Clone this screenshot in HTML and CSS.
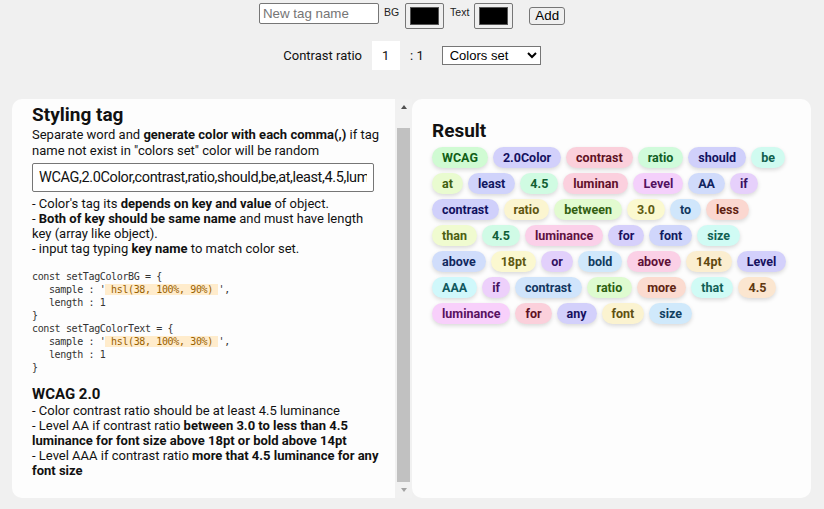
FILE: index.html
```html
<!DOCTYPE html>
<html lang="en">
<head>
<meta charset="utf-8">
<title>Styling tag</title>
<link rel="stylesheet" href="styles.css">
</head>
<body>
<header class="toolbar">
  <div class="row row-add">
    <input class="name-input" type="text" placeholder="New tag name">
    <span class="swatch-label">BG</span>
    <input class="swatch" type="color" value="#000000">
    <span class="swatch-label">Text</span>
    <input class="swatch" type="color" value="#000000">
    <button class="add-btn" type="button">Add</button>
  </div>
  <div class="row row-ratio">
    <span class="ratio-label">Contrast ratio</span>
    <input class="ratio-input" type="text" value="1">
    <span class="ratio-suffix">: 1</span>
    <select class="set-select">
      <option>Colors set</option>
    </select>
  </div>
</header>
<main class="panels">
  <section class="panel-left">
    <div class="styling">
      <h2 class="panel-title">Styling tag</h2>
      <p class="intro">Separate word and <b>generate color with each comma(,)</b> if tag name not exist in "colors set" color will be random</p>
      <input class="tags-input" type="text" value="WCAG,2.0Color,contrast,ratio,should,be,at,least,4.5,luminan,Level,AA,if,contrast,ratio,between,3.0,to,less,than,4.5,luminance,for,font,size,above,18pt,or,bold,above,14pt,Level,AAA,if,contrast,ratio,more,that,4.5,luminance,for,any,font,size">
      <p class="notes">- Color's tag its <b>depends on key and value</b> of object.<br>- <b>Both of key should be same name</b> and must have length key (array like object).<br>- input tag typing <b>key name</b> to match color set.</p>
<pre class="code">const setTagColorBG = {
   sample : '<span class="hl"> hsl(38, 100%, 90%) </span>',
   length : 1
}
const setTagColorText = {
   sample : '<span class="hl"> hsl(38, 100%, 30%) </span>',
   length : 1
}</pre>
      <h3 class="sub-title">WCAG 2.0</h3>
      <p class="notes">- Color contrast ratio should be at least 4.5 luminance<br>- Level AA if contrast ratio <b>between 3.0 to less than 4.5 luminance for font size above 18pt or bold above 14pt</b><br>- Level AAA if contrast ratio <b>more that 4.5 luminance for any font size</b></p>
    </div>
    <div class="scrollbar" aria-hidden="true">
      <span class="sb-btn sb-up"></span>
      <span class="sb-track"><span class="sb-thumb"></span></span>
      <span class="sb-btn sb-down"></span>
    </div>
  </section>
  <section class="panel result">
    <h2 class="panel-title">Result</h2>
    <div class="tags">
      <span class="tag" style="--h:125">WCAG</span>
      <span class="tag" style="--h:243">2.0Color</span>
      <span class="tag" style="--h:345">contrast</span>
      <span class="tag" style="--h:135">ratio</span>
      <span class="tag" style="--h:240">should</span>
      <span class="tag" style="--h:165">be</span>
      <span class="tag" style="--h:85">at</span>
      <span class="tag" style="--h:235">least</span>
      <span class="tag" style="--h:145">4.5</span>
      <span class="tag" style="--h:340">luminan</span>
      <span class="tag" style="--h:290">Level</span>
      <span class="tag" style="--h:225">AA</span>
      <span class="tag" style="--h:270">if</span>
      <span class="tag" style="--h:240">contrast</span>
      <span class="tag" style="--h:52">ratio</span>
      <span class="tag" style="--h:95">between</span>
      <span class="tag" style="--h:57">3.0</span>
      <span class="tag" style="--h:210">to</span>
      <span class="tag" style="--h:10">less</span>
      <span class="tag" style="--h:75">than</span>
      <span class="tag" style="--h:150">4.5</span>
      <span class="tag" style="--h:325">luminance</span>
      <span class="tag" style="--h:248">for</span>
      <span class="tag" style="--h:232">font</span>
      <span class="tag" style="--h:170">size</span>
      <span class="tag" style="--h:222">above</span>
      <span class="tag" style="--h:55">18pt</span>
      <span class="tag" style="--h:265">or</span>
      <span class="tag" style="--h:207">bold</span>
      <span class="tag" style="--h:330">above</span>
      <span class="tag" style="--h:42">14pt</span>
      <span class="tag" style="--h:245">Level</span>
      <span class="tag" style="--h:185">AAA</span>
      <span class="tag" style="--h:280">if</span>
      <span class="tag" style="--h:212">contrast</span>
      <span class="tag" style="--h:100">ratio</span>
      <span class="tag" style="--h:15">more</span>
      <span class="tag" style="--h:172">that</span>
      <span class="tag" style="--h:30">4.5</span>
      <span class="tag" style="--h:295">luminance</span>
      <span class="tag" style="--h:345">for</span>
      <span class="tag" style="--h:245">any</span>
      <span class="tag" style="--h:48">font</span>
      <span class="tag" style="--h:205">size</span>
    </div>
  </section>
</main>
<script src="script.js"></script>
</body>
</html>
```

FILE: styles.css
```css
* { box-sizing: border-box; }

body {
  margin: 0;
  background: #f0f0f0;
  font-family: Roboto, "Liberation Sans", Arial, sans-serif;
  color: #111;
}

.row {
  display: flex;
  justify-content: center;
}

.row-add {
  align-items: flex-start;
  padding-top: 3px;
  height: 28px;
}

.name-input {
  width: 120px;
  height: 21px;
  padding: 1px 3px;
  border: 1px solid #767676;
  border-radius: 2px;
  font: 13.33px "Liberation Sans", Arial, sans-serif;
  background: #fff;
}
.name-input::placeholder { color: #757575; }

.swatch-label {
  font: 10.5px "Liberation Sans", Arial, sans-serif;
  color: #222;
  margin: 3px 6px 0 5px;
}
.swatch-label + .swatch + .swatch-label { margin-left: 6px; margin-right: 5px; }

.swatch {
  width: 39px;
  height: 26px;
  padding: 3px 4px;
  border: 1px solid #767676;
  border-radius: 2px;
  background: #efefef;
  margin: 0;
}
.swatch::-webkit-color-swatch-wrapper { padding: 0; }
.swatch::-webkit-color-swatch { border: 1px solid #555; border-radius: 0; }

.add-btn {
  margin: 4px 0 0 16px;
  height: 18px;
  padding: 0 5px;
  border: 1px solid #767676;
  border-radius: 3px;
  background: #efefef;
  font: 13.33px "Liberation Sans", Arial, sans-serif;
  line-height: 16px;
  color: #000;
}

.row-ratio {
  align-items: center;
  margin-top: 13px;
  height: 29px;
  font-size: 13px;
}

.ratio-input {
  width: 28px;
  height: 29px;
  margin: 0 10px;
  padding: 0 0 0 10px;
  border: none;
  background: #fff;
  font: 13px Roboto, sans-serif;
  color: #111;
}

.ratio-suffix { margin-right: 18px; }

.set-select {
  width: 99px;
  height: 19px;
  padding: 0 0 0 3px;
  border: 1px solid #767676;
  border-radius: 0;
  background: #fff;
  font: 13px "Liberation Sans", Arial, sans-serif;
  color: #000;
}

.panels {
  display: grid;
  grid-template-columns: 400px 399px;
  margin: 29px 0 0 12px;
}

.panel-left {
  display: flex;
  height: 399px;
  background: #fdfdfd;
  border-radius: 10px 0 0 10px;
  overflow: hidden;
}

.styling {
  flex: 1;
  min-width: 0;
  overflow-y: scroll;
  scrollbar-width: none;
  padding: 20px 13px 20px 20px;
}
.styling::-webkit-scrollbar { display: none; }

.scrollbar {
  flex: none;
  width: 17px;
  display: flex;
  flex-direction: column;
  background: #f1f1f1;
}

.sb-btn {
  flex: none;
  height: 16px;
  display: flex;
  align-items: center;
  justify-content: center;
}
.sb-btn::before {
  content: "";
  width: 0;
  height: 0;
  border-left: 3.5px solid transparent;
  border-right: 3.5px solid transparent;
}
.sb-up::before { border-bottom: 4px solid #505050; }
.sb-down::before { border-top: 4px solid #a3a3a3; }

.sb-track {
  flex: 1;
  display: flex;
  flex-direction: column;
  justify-content: flex-end;
  padding: 0 2px;
}
.sb-thumb {
  height: 354px;
  background: #c1c1c1;
}

.panel {
  height: 399px;
  background: #fdfdfd;
  padding: 20px;
}

.result {
  border-radius: 10px;
  padding-right: 14px;
}

.panel-title {
  margin: 0;
  font-size: 19px;
  line-height: 24px;
  font-weight: 700;
}

.intro {
  margin: 0;
  font-size: 13px;
  line-height: 16px;
}

.tags-input {
  display: block;
  width: 342px;
  height: 29px;
  margin-top: 4px;
  padding: 0 6px;
  border: 1px solid #767676;
  border-radius: 2px;
  font: 14.5px Roboto, sans-serif;
  letter-spacing: -0.38px;
  color: #111;
  background: #fff;
}

.notes {
  margin: 4px 0 0;
  font-size: 13px;
  line-height: 15px;
}

.code {
  margin: 14px 0 0;
  font-family: "DejaVu Sans Mono", "Liberation Mono", monospace;
  font-size: 10px;
  letter-spacing: -0.37px;
  line-height: 13px;
  color: #333;
}

.hl {
  background: hsl(38, 100%, 90%);
  color: hsl(38, 100%, 30%);
}

.sub-title {
  margin: 11px 0 0;
  font-size: 15px;
  line-height: 18px;
  font-weight: 700;
}

.sub-title + .notes { margin-top: 0; }

.result .panel-title { margin-bottom: 4px; }

.tags {
  display: flex;
  flex-wrap: wrap;
  gap: 5px;
}

.tag {
  height: 21px;
  padding: 0 10px;
  border-radius: 11px;
  font-size: 12.5px;
  line-height: 21px;
  font-weight: 700;
  background: hsl(var(--h), 85%, 90%);
  color: hsl(var(--h), 70%, 22%);
  box-shadow: 0 2px 4px rgba(0, 0, 0, 0.14);
}
```

FILE: script.js
```js
const styling = document.querySelector('.styling');
styling.scrollTop = styling.scrollHeight;
```
